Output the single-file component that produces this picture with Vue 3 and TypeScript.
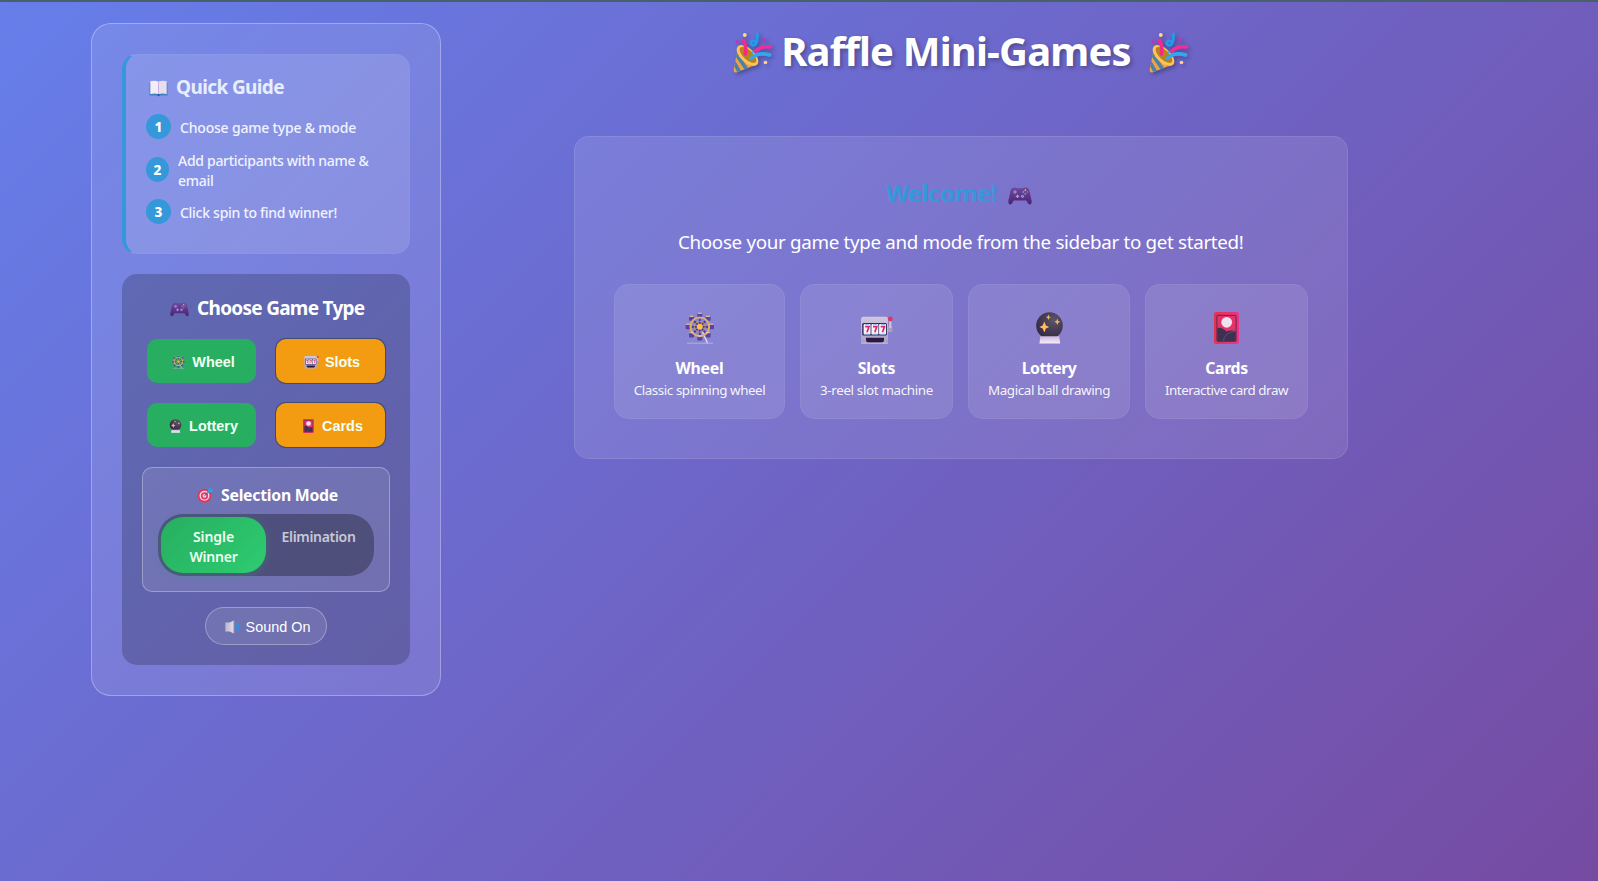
<script setup lang="ts">
import { ref } from 'vue'
import type { Directive } from 'vue'

interface Game { icon: string; name: string; text: string; nameW: number; textW: number; cls: string }

const games: Game[] = [
  { icon: 'wheel', name: 'Wheel', text: 'Classic spinning wheel', nameW: 48, textW: 131.5, cls: 'w1' },
  { icon: 'slots', name: 'Slots', text: '3-reel slot machine', nameW: 37.5, textW: 113, cls: 'w2' },
  { icon: 'ball', name: 'Lottery', text: 'Magical ball drawing', nameW: 54.5, textW: 122, cls: 'w3' },
  { icon: 'cards', name: 'Cards', text: 'Interactive card draw', nameW: 42.5, textW: 123, cls: 'w4' },
]
const steps = [
  [{ t: 'Choose game type & mode', w: 176 }],
  [{ t: 'Add participants with name &', w: 190.5 }, { t: 'email', w: 35.5 }],
  [{ t: 'Click spin to find winner!', w: 157 }],
]
const mode = ref<'single' | 'elimination'>('single')
const sound = ref(true)

// Tracks a label in or out so that it takes up the given width.
const vFit: Directive<HTMLElement, number> = {
  mounted(el, { value }) {
    const n = (el.textContent ?? '').length
    if (n) el.style.letterSpacing = `${(value - el.getBoundingClientRect().width) / n}px`
  },
}
</script>

<template>
  <div class="page">
    <svg class="defs" width="0" height="0">
      <defs>
        <linearGradient id="gPad" x1="0" y1="0" x2="0" y2="1"><stop offset="0" stop-color="#6d4a9e" /><stop offset="1" stop-color="#4b2374" /></linearGradient>
        <linearGradient id="gSlot" x1="0" y1="0" x2="0" y2="1"><stop offset="0" stop-color="#cfc8de" /><stop offset="1" stop-color="#a99fc0" /></linearGradient>
        <radialGradient id="gBall" cx=".65" cy=".3" r=".8"><stop offset="0" stop-color="#5d5468" /><stop offset="1" stop-color="#2e2540" /></radialGradient>
        <linearGradient id="gBase" x1="0" y1="0" x2="0" y2="1"><stop offset="0" stop-color="#cdb6e0" /><stop offset="1" stop-color="#f6effb" /></linearGradient>
        <linearGradient id="gCard" x1="0" y1="0" x2="1" y2="0"><stop offset="0" stop-color="#e0344f" /><stop offset="1" stop-color="#ec3486" /></linearGradient>
        <linearGradient id="gSpk" x1="0" y1="0" x2="1" y2="0"><stop offset="0" stop-color="#b9b4c6" /><stop offset="1" stop-color="#e6e1ee" /></linearGradient>
      </defs>
      <symbol id="party" viewBox="0 0 40 41">
        <path d="M5 15 L0.6 38 Q0.4 41 3.4 40.4 L25 32 Z" fill="#eda445" />
        <path d="M4 20 L15 36 L11.5 37.4 L3 25Z M2.4 29 L8 38.7 L4.2 40.1 L1.4 34.5Z M5.5 16.4 L24 32.4 L19 34.4 L5 20Z" fill="#4d7fa8" />
        <ellipse cx="14.5" cy="23.5" rx="13.3" ry="7" transform="rotate(43 14.5 23.5)" fill="#ffc357" />
        <ellipse cx="15" cy="23" rx="10.6" ry="4.7" transform="rotate(43 15 23)" fill="#b8831c" />
        <path d="M12.5 22 Q13.8 14.5 10.4 8.5" fill="none" stroke="#f42b86" stroke-width="3.6" stroke-linecap="round" />
        <path d="M23 19 Q28 13.5 37.6 15" fill="none" stroke="#f42b9a" stroke-width="3.4" stroke-linecap="round" />
        <path d="M18 26.5 Q25 19.5 36.5 23" fill="none" stroke="#32a7ee" stroke-width="3.8" stroke-linecap="round" />
        <path d="M24.4 2 Q24.8 14 19.8 13.4 C15.5 12.5 19 5.6 23.2 10.6" fill="none" stroke="#239be8" stroke-width="2.8" stroke-linecap="round" />
        <circle cx="11.8" cy="3" r="1.9" fill="#ffd88a" /><circle cx="32.5" cy="30.5" r="1.8" fill="#ffd18a" />
        <circle cx="31" cy="8" r="1.9" fill="#bb35b5" /><circle cx="4.3" cy="9.7" r="1.6" fill="#bb35b5" /><circle cx="19.6" cy="20" r="1.3" fill="#38b8d8" />
      </symbol>
      <symbol id="book" viewBox="0 0 19 17">
        <path d="M0.5 3 H18.5 V15.5 H0.5Z" fill="#3e80c4" />
        <path d="M1.3 1.2 Q6 .4 9.3 1.4 V14 Q6 13.2 1.3 14Z" fill="#f3edf8" /><path d="M17.7 1.2 Q13 .4 9.7 1.4 V14 Q13 13.2 17.7 14Z" fill="#e7dfee" />
        <path d="M9.5 1.4 V14" stroke="#c8b5dc" stroke-width=".9" /><circle cx="9.5" cy="15.2" r="1.1" fill="#2e5595" />
      </symbol>
      <symbol id="pad" viewBox="0 0 24 18">
        <path d="M5 .8 Q8 .1 9 1.2 H15 Q16 .1 19 .8 Q21 1.3 21.7 5 L23.7 14 Q23.8 17.8 21.3 17.4 Q19.8 17 18.2 13.6 H5.8 Q4.2 17 2.7 17.4 Q.2 17.8 .3 14 L2.3 5 Q3 1.3 5 .8Z" fill="url(#gPad)" />
        <circle cx="7" cy="5" r="1.7" fill="#9d82c8" /><circle cx="14.5" cy="9.3" r="1.6" fill="#9d82c8" />
        <path d="M9.5 7.7v3.4M7.8 9.4h3.4" stroke="#b79bdd" stroke-width="1.2" />
        <circle cx="17.3" cy="3.1" r=".9" fill="#f7b84b" /><circle cx="19.3" cy="5" r=".9" fill="#f04a65" /><circle cx="17.3" cy="6.9" r=".9" fill="#37b9c7" /><circle cx="15.4" cy="5" r=".9" fill="#63a1f4" />
      </symbol>
      <symbol id="wheel" viewBox="0 0 30 32">
        <path d="M2 31.2H28" stroke="#b9b0dc" stroke-width="1" /><path d="M17.5 20 L22.5 31" stroke="#ded8ee" stroke-width="1.4" /><path d="M11.5 22 L6.5 31" stroke="#9a8cc8" stroke-width="1" />
        <g fill="#5d419d"><rect x="12.3" y="1" width="5" height="4.6" rx="1" /><rect x="12.3" y="24" width="5" height="4.6" rx="1" /><rect x="0.6" y="12.3" width="5" height="5" rx="1" /><rect x="24" y="12.3" width="5" height="5" rx="1" /><rect x="4" y="4.2" width="5" height="4.6" rx="1" /><rect x="20.6" y="4.2" width="5" height="4.6" rx="1" /><rect x="4" y="20.6" width="5" height="5" rx="1" /><rect x="20.6" y="20.6" width="5" height="5" rx="1" /></g>
        <circle cx="14.8" cy="14.8" r="9.4" fill="none" stroke="#e0b067" stroke-width="1.9" />
        <path d="M14.8 7v16M7 14.8h16M9.2 9.2l11.2 11.2M20.4 9.2l-11.2 11.2" stroke="#4c3590" stroke-width="1.8" />
        <circle cx="14.8" cy="14.8" r="5.4" fill="none" stroke="#c99747" stroke-width="1" /><circle cx="14.8" cy="14.8" r="3" fill="#ffc04a" />
        <path d="M12.8 1.3h4M4.5 4.3h4M21 4.3h4M1 12.2h4M24.6 12.2h4M4.5 20.7h4M21 20.7h4M12.8 24h4" stroke="#efd2a6" stroke-width="1" />
      </symbol>
      <symbol id="slots" viewBox="0 0 33 28">
        <rect x="26" y="10" width="6.4" height="6" rx="1.5" fill="#aaa0be" /><path d="M30.3 3v9" stroke="#cec6db" stroke-width="2.2" /><circle cx="30.3" cy="3" r="2.4" fill="#e63263" />
        <rect x="1" y="0.8" width="27" height="26.7" rx="2.4" fill="url(#gSlot)" /><rect x="2.2" y="7" width="24.8" height="12.5" rx="1.5" fill="#2d2858" />
        <g fill="#f4f2ff"><rect x="3.6" y="8" width="7" height="10.5" rx=".8" /><rect x="11.4" y="8" width="7" height="10.5" rx=".8" /><rect x="19.1" y="8" width="7" height="10.5" rx=".8" /></g>
        <path d="M5.2 10.6h3.8l-2 5.6M13 10.6h3.8l-2 5.6M20.7 10.6h3.8l-2 5.6" fill="none" stroke="#e1275f" stroke-width="1.7" />
        <path d="M5 8.4h4M13 8.4h4M21 8.4h4M5 18.2h4M13 18.2h4M21 18.2h4" stroke="#7ba8ee" stroke-width=".8" />
        <path d="M6 21.7H24V24Q24 26.5 21 26.5H9Q6 26.5 6 24Z" fill="#2c1846" /><path d="M1 27.2H28" stroke="#c7bddb" stroke-width="1" />
      </symbol>
      <symbol id="ball" viewBox="0 0 27 32">
        <circle cx="13.5" cy="13.6" r="13.3" fill="url(#gBall)" /><path d="M4.4 24.3H23.2L24.2 31.6H3.4Z" fill="url(#gBase)" />
        <path d="M8.3 9.4 L9.9 13.4 L13.2 15 L9.9 16.6 L8.3 20.6 L6.7 16.6 L3.4 15 L6.7 13.4Z" fill="#ffbd5c" />
        <path d="M12.4 2.6 L13.2 4.5 L14.8 5.3 L13.2 6.1 L12.4 8 L11.6 6.1 L10 5.3 L11.6 4.5Z M21.3 6.6 L22.2 8.9 L24.4 9.8 L22.2 10.7 L21.3 13 L20.4 10.7 L18.2 9.8 L20.4 8.9Z" fill="#f0b957" />
      </symbol>
      <symbol id="cards" viewBox="0 0 25 32">
        <rect width="25" height="32" rx="2.3" fill="url(#gCard)" /><rect x="2.9" y="3.4" width="19.2" height="26" rx=".8" fill="#e33469" stroke="#6c2450" stroke-width="1" />
        <circle cx="12.7" cy="10.3" r="5.4" fill="#f0e2ee" />
        <path d="M3.3 16 Q8 14.6 12.5 19.6 Q16.5 17.6 21.7 19 V29 H3.3Z" fill="#3d3050" /><path d="M9.5 29 Q9.5 21 21.7 19" fill="none" stroke="#5c5072" stroke-width="1" />
      </symbol>
      <symbol id="target" viewBox="0 0 17 16">
        <circle cx="7.5" cy="8.8" r="7" fill="#e0395d" /><circle cx="7.5" cy="8.8" r="5" fill="#eed7e7" /><circle cx="7.5" cy="8.8" r="3.6" fill="#de3865" /><circle cx="7.5" cy="8.8" r="1.9" fill="#f2dce9" />
        <path d="M7.3 9 L12.5 4" stroke="#354f79" stroke-width="1" /><path d="M10.6 5.6 L11 2.9 L13.6 .3 L14.2 2.4 L16.6 3 L14 5.6Z" fill="#36a0e5" />
      </symbol>
      <symbol id="sound" viewBox="0 0 15 14">
        <path d="M.3 2.6 H4.6 L9 .5 V13.5 L4.6 11.4 H.3Z" fill="url(#gSpk)" /><path d="M8.8 .8v12.4" stroke="#a39db4" stroke-width="1" />
        <path d="M10.6 4.4 Q12.2 7 10.6 9.6 M12.2 2.4 Q15.3 7 12.2 11.6" fill="none" stroke="#3c8fdc" stroke-width="1.5" />
      </symbol>
    </svg>

    <aside class="sidebar">
      <section class="guide">
        <h3><svg class="i-book"><use href="#book" /></svg><span v-fit="108">Quick Guide</span></h3>
        <div v-for="(s, i) in steps" :key="i" class="step" :class="{ two: s.length > 1 }">
          <span class="num">{{ i + 1 }}</span>
          <div class="lines"><div v-for="l in s" :key="l.t"><span v-fit="l.w">{{ l.t }}</span></div></div>
        </div>
      </section>

      <section class="controls">
        <h3><svg class="i-pad"><use href="#pad" /></svg><span v-fit="167.5">Choose Game Type</span></h3>
        <div class="types">
          <button v-for="(g, i) in games" :key="g.name" :class="{ orange: i % 2 }">
            <svg class="i-btn"><use :href="'#' + g.icon" /></svg>{{ g.name }}
          </button>
        </div>
        <div class="mode">
          <h4><svg class="i-target"><use href="#target" /></svg><span v-fit="117">Selection Mode</span></h4>
          <div class="toggle">
            <div class="opt" :class="{ on: mode === 'single' }" @click="mode = 'single'">
              <div><span v-fit="41">Single</span></div><div><span v-fit="48">Winner</span></div>
            </div>
            <div class="opt" :class="{ on: mode === 'elimination' }" @click="mode = 'elimination'"><span v-fit="74">Elimination</span></div>
          </div>
        </div>
        <button class="sound" @click="sound = !sound"><svg class="i-sound"><use href="#sound" /></svg>{{ sound ? 'Sound On' : 'Sound Off' }}</button>
      </section>
    </aside>

    <main>
      <h1><svg><use href="#party" /></svg><span v-fit="350">Raffle Mini-Games</span><svg><use href="#party" /></svg></h1>
      <section class="welcome">
        <h2><span v-fit="111">Welcome!</span><svg class="i-welcome"><use href="#pad" /></svg></h2>
        <p><span v-fit="565.5">Choose your game type and mode from the sidebar to get started!</span></p>
        <div class="cards">
          <article v-for="g in games" :key="g.name" :class="g.cls">
            <svg :class="'i-' + g.icon"><use :href="'#' + g.icon" /></svg>
            <div class="name"><span v-fit="g.nameW">{{ g.name }}</span></div>
            <div class="text"><span v-fit="g.textW">{{ g.text }}</span></div>
          </article>
        </div>
      </section>
    </main>
  </div>
</template>

<style>
body { margin: 0; }
</style>

<style scoped>
* { box-sizing: border-box; }
.page {
  height: 881px; display: flex; align-items: flex-start; overflow: hidden;
  padding: 21px 0 0 91px; border-top: 2px solid #46606c; color: #fff;
  background: linear-gradient(135deg, #667eea 0%, #764ba2 100%);
  font-family: "Noto Sans", "Open Sans", sans-serif; white-space: nowrap;
}
.defs { position: absolute; }
svg { display: block; flex: none; }
h1, h2, h3, h4, p { margin: 0; }
span { display: inline-block; }
.sidebar {
  width: 350px; height: 673px; flex: none; padding: 30px; border-radius: 20px;
  background: rgba(255, 255, 255, .1); border: 1px solid rgba(255, 255, 255, .3);
}
.guide {
  height: 200px; padding: 17px 20px 0; border-radius: 15px; border: 1px solid rgba(255, 255, 255, .04);
  border-left: 4px solid #3498db; background: rgba(255, 255, 255, .12); color: #f0f3ff;
}
.guide h3 { display: flex; align-items: center; font-size: 19px; line-height: 30px; margin-bottom: 12px; padding-left: 3px; color: #e8eeff; }
.i-book { width: 19px; height: 17px; margin: 3px 8px 0 0; }
.step { display: flex; align-items: center; height: 25px; font-size: 14px; line-height: 20px; font-weight: 500; }
.step.two { height: 40px; margin: 11px 0 9px; }
.num {
  width: 25px; height: 25px; flex: none; margin-right: 9px; border-radius: 50%; background: #3498db;
  font-size: 13.6px; font-weight: 800; line-height: 25px; text-align: center; color: #fff;
}
.two .num { width: 23px; }
.lines { padding-top: 3px; }
.two .lines { padding-top: 1px; }
.two .num { margin-top: -1px; }
.controls { height: 391px; margin-top: 20px; padding: 19px 20px 0; border-radius: 15px; background: rgba(0, 0, 0, .2); }
.controls h3 { display: flex; align-items: center; font-size: 19px; line-height: 30px; padding-left: 28px; }
.i-pad { width: 19px; height: 15px; margin: 2px 8px 0 0; }
.types { display: grid; grid-template-columns: 109px 109px; gap: 20px 20px; justify-content: center; margin-top: 16px; }
button { font-family: "Liberation Sans", Arial, sans-serif; font-size: 14.4px; color: #fff; padding: 0; display: flex; align-items: center; justify-content: center; }
.types button { height: 44px; border: 0; border-radius: 10px; background: #27ae60; font-weight: 700; color: #f2fff5; padding: 2px 0 0 3px; }
.types .orange { background: #f39c12; box-shadow: 0 0 0 1px rgba(48, 62, 80, .65); }
.i-btn { width: 15px; height: 14px; margin-right: 6px; }
.mode { height: 125px; margin-top: 20px; padding: 14px 15px 0; border-radius: 10px; border: 1px solid rgba(255, 255, 255, .3); background: rgba(255, 255, 255, .1); }
.mode h4 { display: flex; align-items: center; font-size: 15.8px; line-height: 26px; padding-left: 39px; }
.i-target { width: 17px; height: 16px; margin-right: 7px; }
.toggle { display: flex; height: 62px; margin-top: 6px; padding: 3px; border-radius: 25px; background: rgba(0, 0, 0, .3); }
.opt { flex: 1; border-radius: 22px; padding-top: 10px; font-size: 14px; font-weight: 600; line-height: 20px; text-align: center; color: rgba(255, 255, 255, .7); }
.opt.on { color: #eefff4; background: linear-gradient(135deg, #27ae60, #2ecc71); box-shadow: 0 2px 8px rgba(39, 174, 96, .3); }
.sound { width: 122px; height: 38px; margin: 15px auto 0; border-radius: 19px; border: 1px solid rgba(255, 255, 255, .3); background: rgba(255, 255, 255, .1); }
.sound { padding: 2px 0 0 3px; }
.i-sound { width: 15px; height: 14px; margin-right: 6px; }
main { width: 774px; flex: none; margin-left: 133px; }
h1 { display: flex; align-items: center; justify-content: center; font-size: 40px; line-height: 54px; padding-top: 1px; text-shadow: 2px 2px 4px rgba(0, 0, 0, .3); }
h1 svg { width: 40px; height: 41px; margin: 2px 8px 0 0; filter: drop-shadow(2px 2px 2px rgba(0, 0, 0, .3)); }
h1 span + svg { margin: 2px 0 0 18px; }
.welcome { height: 323px; margin-top: 58px; padding: 40px 0 0 39px; border-radius: 15px; border: 1px solid rgba(255, 255, 255, .1); background: rgba(255, 255, 255, .1); }
h2 { display: flex; align-items: center; font-size: 24px; line-height: 32px; padding-left: 272px; color: #3498db; }
.i-welcome { width: 24px; height: 18px; margin: 6px 0 0 11px; }
p { font-size: 18.8px; line-height: 30px; margin-top: 18px; padding-left: 64px; }
.cards { display: flex; gap: 15px; margin-top: 27px; }
article { height: 135px; padding-top: 27px; border-radius: 15px; border: 1px solid rgba(255, 255, 255, .06); background: rgba(255, 255, 255, .1); text-align: center; }
.w1 { width: 171px; }
.w2 { width: 153px; }
.w3 { width: 162px; }
.w4 { width: 163px; }
article svg { height: 32px; margin: 0 auto 12px; }
.i-wheel { width: 30px; }
article .i-slots { width: 33px; height: 28px; margin-top: 4px; }
.i-ball { width: 27px; }
.i-cards { width: 25px; }
.name { font-size: 15.8px; font-weight: 700; line-height: 24px; }
.text { font-size: 13.4px; line-height: 20px; color: rgba(255, 255, 255, .93); }
</style>
